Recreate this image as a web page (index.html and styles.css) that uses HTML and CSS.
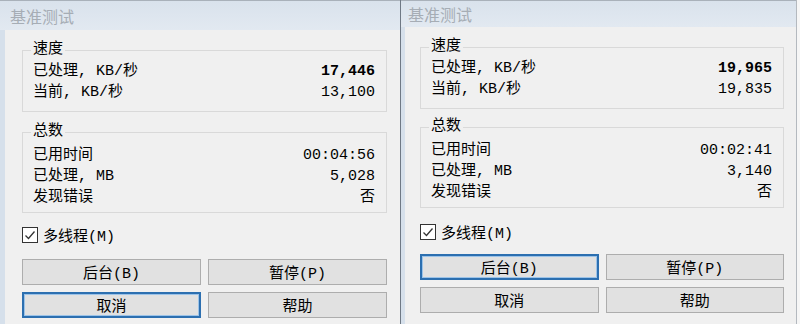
FILE: index.html
```html
<!DOCTYPE html>
<html>
<head>
<meta charset="UTF-8">
<title>基准测试</title>
<link rel="stylesheet" href="styles.css">
</head>
<body>
<div class="screens">
	<!-- first run -->
	<div class="win win-left">
		<div class="title-bar">基准测试</div>
		<div class="win-body">
			<fieldset class="group">
				<legend>速度</legend>
				<div class="row"><span>已处理, KB/秒</span><span class="val bold">17,446</span></div>
				<div class="row"><span>当前, KB/秒</span><span class="val">13,100</span></div>
			</fieldset>
			<fieldset class="group group-total">
				<legend>总数</legend>
				<div class="row"><span>已用时间</span><span class="val">00:04:56</span></div>
				<div class="row"><span>已处理, MB</span><span class="val">5,028</span></div>
				<div class="row"><span>发现错误</span><span class="val">否</span></div>
			</fieldset>
			<label class="check">
				<span class="box"><svg width="12" height="12" viewBox="0 0 12 12"><polyline points="1.5,6.5 4.5,9.5 10.5,2.5" fill="none" stroke="#333" stroke-width="1.3"/></svg></span>
				多线程(M)
			</label>
			<div class="buttons">
				<button class="btn">后台(B)</button>
				<button class="btn">暂停(P)</button>
				<button class="btn btn-focus">取消</button>
				<button class="btn">帮助</button>
			</div>
		</div>
	</div>

	<!-- second run -->
	<div class="win win-right">
		<div class="title-bar">基准测试</div>
		<div class="win-body">
			<fieldset class="group">
				<legend>速度</legend>
				<div class="row"><span>已处理, KB/秒</span><span class="val bold">19,965</span></div>
				<div class="row"><span>当前, KB/秒</span><span class="val">19,835</span></div>
			</fieldset>
			<fieldset class="group group-total">
				<legend>总数</legend>
				<div class="row"><span>已用时间</span><span class="val">00:02:41</span></div>
				<div class="row"><span>已处理, MB</span><span class="val">3,140</span></div>
				<div class="row"><span>发现错误</span><span class="val">否</span></div>
			</fieldset>
			<label class="check">
				<span class="box"><svg width="12" height="12" viewBox="0 0 12 12"><polyline points="1.5,6.5 4.5,9.5 10.5,2.5" fill="none" stroke="#333" stroke-width="1.3"/></svg></span>
				多线程(M)
			</label>
			<div class="buttons">
				<button class="btn btn-focus">后台(B)</button>
				<button class="btn">暂停(P)</button>
				<button class="btn">取消</button>
				<button class="btn">帮助</button>
			</div>
		</div>
	</div>
</div>
</body>
</html>
```

FILE: styles.css
```css
body
{
	margin: 0;
	padding: 0;
	background-color: #f6f6f6;
	color: #000;
	font-family: "Liberation Mono", "Noto Sans CJK SC", monospace;
	font-size: 15px;
}

.screens
{
	display: flex;
	height: 324px;
	overflow: hidden;
}

.win
{
	display: flex;
	flex-direction: column;
	box-sizing: border-box;
}

.win-left
{
	width: 401px;
	border-right: 1px solid #6f7985;
}

.win-right
{
	width: 396px;
	border-right: 1px solid #b4b9bf;
}

.title-bar
{
	height: 30px;
	box-sizing: border-box;
	border-top: 1px solid #a9b1ba;
	padding-left: 10px;
	display: flex;
	align-items: center;
	background: linear-gradient(#d9e2ec, #e2e9f1);
	color: #a6adb5;
	font-family: "Noto Sans CJK SC", sans-serif;
	font-size: 16px;
}

.win-right .title-bar
{
	height: 27px;
	padding-left: 7px;
}

.win-body
{
	flex: 1;
	background-color: #f0f0f0;
	border-left: 5px solid #d6e0eb;
	padding: 10px 13px 0 17px;
}

.win-right .win-body
{
	border-left-width: 4px;
	padding: 10px 12px 0 15px;
}

.group
{
	margin: 0;
	padding: 1px 11px 8px 10px;
	border: 1px solid #d9d9d9;
}

.group legend
{
	padding: 0 2px;
	margin-left: -2px;
	line-height: 20px;
}

.group-total
{
	margin-top: 10px;
	padding-top: 3px;
	padding-bottom: 4px;
}

.win-right .group-total
{
	margin-top: 8px;
}

.row
{
	display: flex;
	justify-content: space-between;
	line-height: 21px;
}

.bold
{
	font-weight: bold;
}

.check
{
	display: flex;
	align-items: center;
	height: 20px;
	margin-top: 12px;
}

.win-right .check
{
	margin-top: 14px;
}

.check .box
{
	width: 14px;
	height: 14px;
	border: 1px solid #333;
	background-color: #fff;
	margin-right: 5px;
	display: flex;
	align-items: center;
	justify-content: center;
}

.buttons
{
	display: grid;
	grid-template-columns: 1fr 1fr;
	column-gap: 7px;
	row-gap: 7px;
	margin-top: 14px;
}

.win-right .buttons
{
	margin-top: 12px;
}

.btn
{
	height: 26px;
	margin: 0;
	padding: 0;
	background-color: #e1e1e1;
	border: 1px solid #adadad;
	color: #000;
	font-family: "Liberation Mono", "Noto Sans CJK SC", monospace;
	font-size: 15px;
}

.btn-focus
{
	border: 2px solid #2c6fb0;
	box-shadow: inset 0 0 0 1px #9cc3e8;
}
```
